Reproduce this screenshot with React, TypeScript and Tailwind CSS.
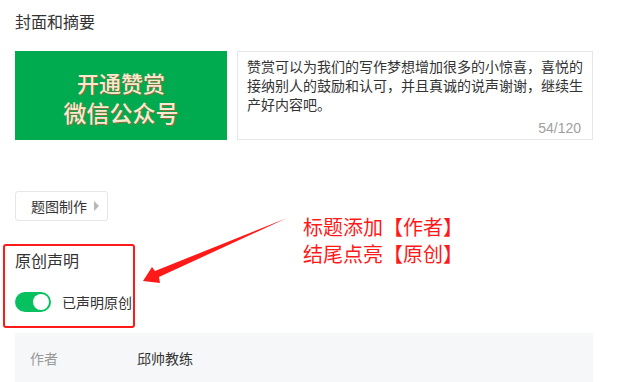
import React from "react";

export default function App() {
  const font = { fontFamily: '"Noto Sans CJK SC", "Liberation Sans", sans-serif' };
  return (
    <div className="relative w-[641px] h-[382px] overflow-hidden bg-white text-[#333]" style={font}>
      <div className="pl-[15px] pt-[9px]">
        <div className="text-[16px] leading-[24px] text-[#333]">封面和摘要</div>
        <div className="mt-[18px] flex gap-[10px]">
          <div className="w-[212px] h-[89px] bg-[#00ab4f] flex flex-col items-center justify-center pt-[2px]">
            <div className="text-[22px] leading-[30px] font-medium text-[#f8ead0] [text-shadow:1px_1px_1px_#9a6a3a]">开通赞赏</div>
            <div className="text-[23px] leading-[30px] font-medium text-[#f8ead0] [text-shadow:1px_1px_1px_#9a6a3a]">微信公众号</div>
          </div>
          <div className="w-[356px] h-[89px] border border-[#e4e6ea] px-[9px] pt-[5px] flex flex-col">
            <div className="text-[14px] leading-[19px] text-[#333]">
              赞赏可以为我们的写作梦想增加很多的小惊喜，喜悦的接纳别人的鼓励和认可，并且真诚的说声谢谢，继续生产好内容吧。
            </div>
            <div className="mt-auto mb-[2px] text-right pr-[2px] text-[14px] leading-[18px] text-[#a0a0a0]" style={{ fontFamily: '"Liberation Sans", sans-serif' }}>
              54/120
            </div>
          </div>
        </div>
        <div className="mt-[51px] w-[93px] h-[30px] border border-[#e4e6ea] rounded-[3px] flex items-center pl-[15px]">
          <span className="text-[14px] leading-[18px] text-[#333]">题图制作</span>
          <span className="ml-[7px] w-0 h-0 border-y-[5px] border-y-transparent border-l-[5px] border-l-[#b8b8b8]" />
        </div>
        <div className="mt-[23px] -ml-[12px] w-[132px] h-[84px] border-2 border-[#ff1a1a] rounded-[3px] pl-[10px] pt-[3px]">
          <div className="text-[16px] leading-[22px] text-[#333]">原创声明</div>
          <div className="mt-[21px] flex items-center">
            <div className="w-[36px] h-[20px] rounded-full bg-[#07c160] relative">
              <div className="absolute right-[2px] top-[2px] w-[16px] h-[16px] rounded-full bg-white" />
            </div>
            <span className="ml-[11px] text-[14px] leading-[18px] text-[#333]">已声明原创</span>
          </div>
        </div>
        <div className="mt-[5px] w-[578px] h-[60px] bg-[#f6f7f9] flex items-start pt-[16px]">
          <span className="ml-[15px] w-[107px] text-[14px] leading-[18px] text-[#999]">作者</span>
          <span className="text-[14px] leading-[18px] text-[#333]">邱帅教练</span>
        </div>
      </div>

      <div className="absolute left-[303px] top-[213px] text-[20px] leading-[27px] text-[#ff1a1a]">
        <div>标题添加【作者】</div>
        <div>结尾点亮【原创】</div>
      </div>

      <svg className="absolute left-0 top-0" width="641" height="382" viewBox="0 0 641 382">
        <polygon points="143,281 152,267 155,271 287,218 159,277 160,283" fill="#ff1a1a" />
      </svg>
    </div>
  );
}
